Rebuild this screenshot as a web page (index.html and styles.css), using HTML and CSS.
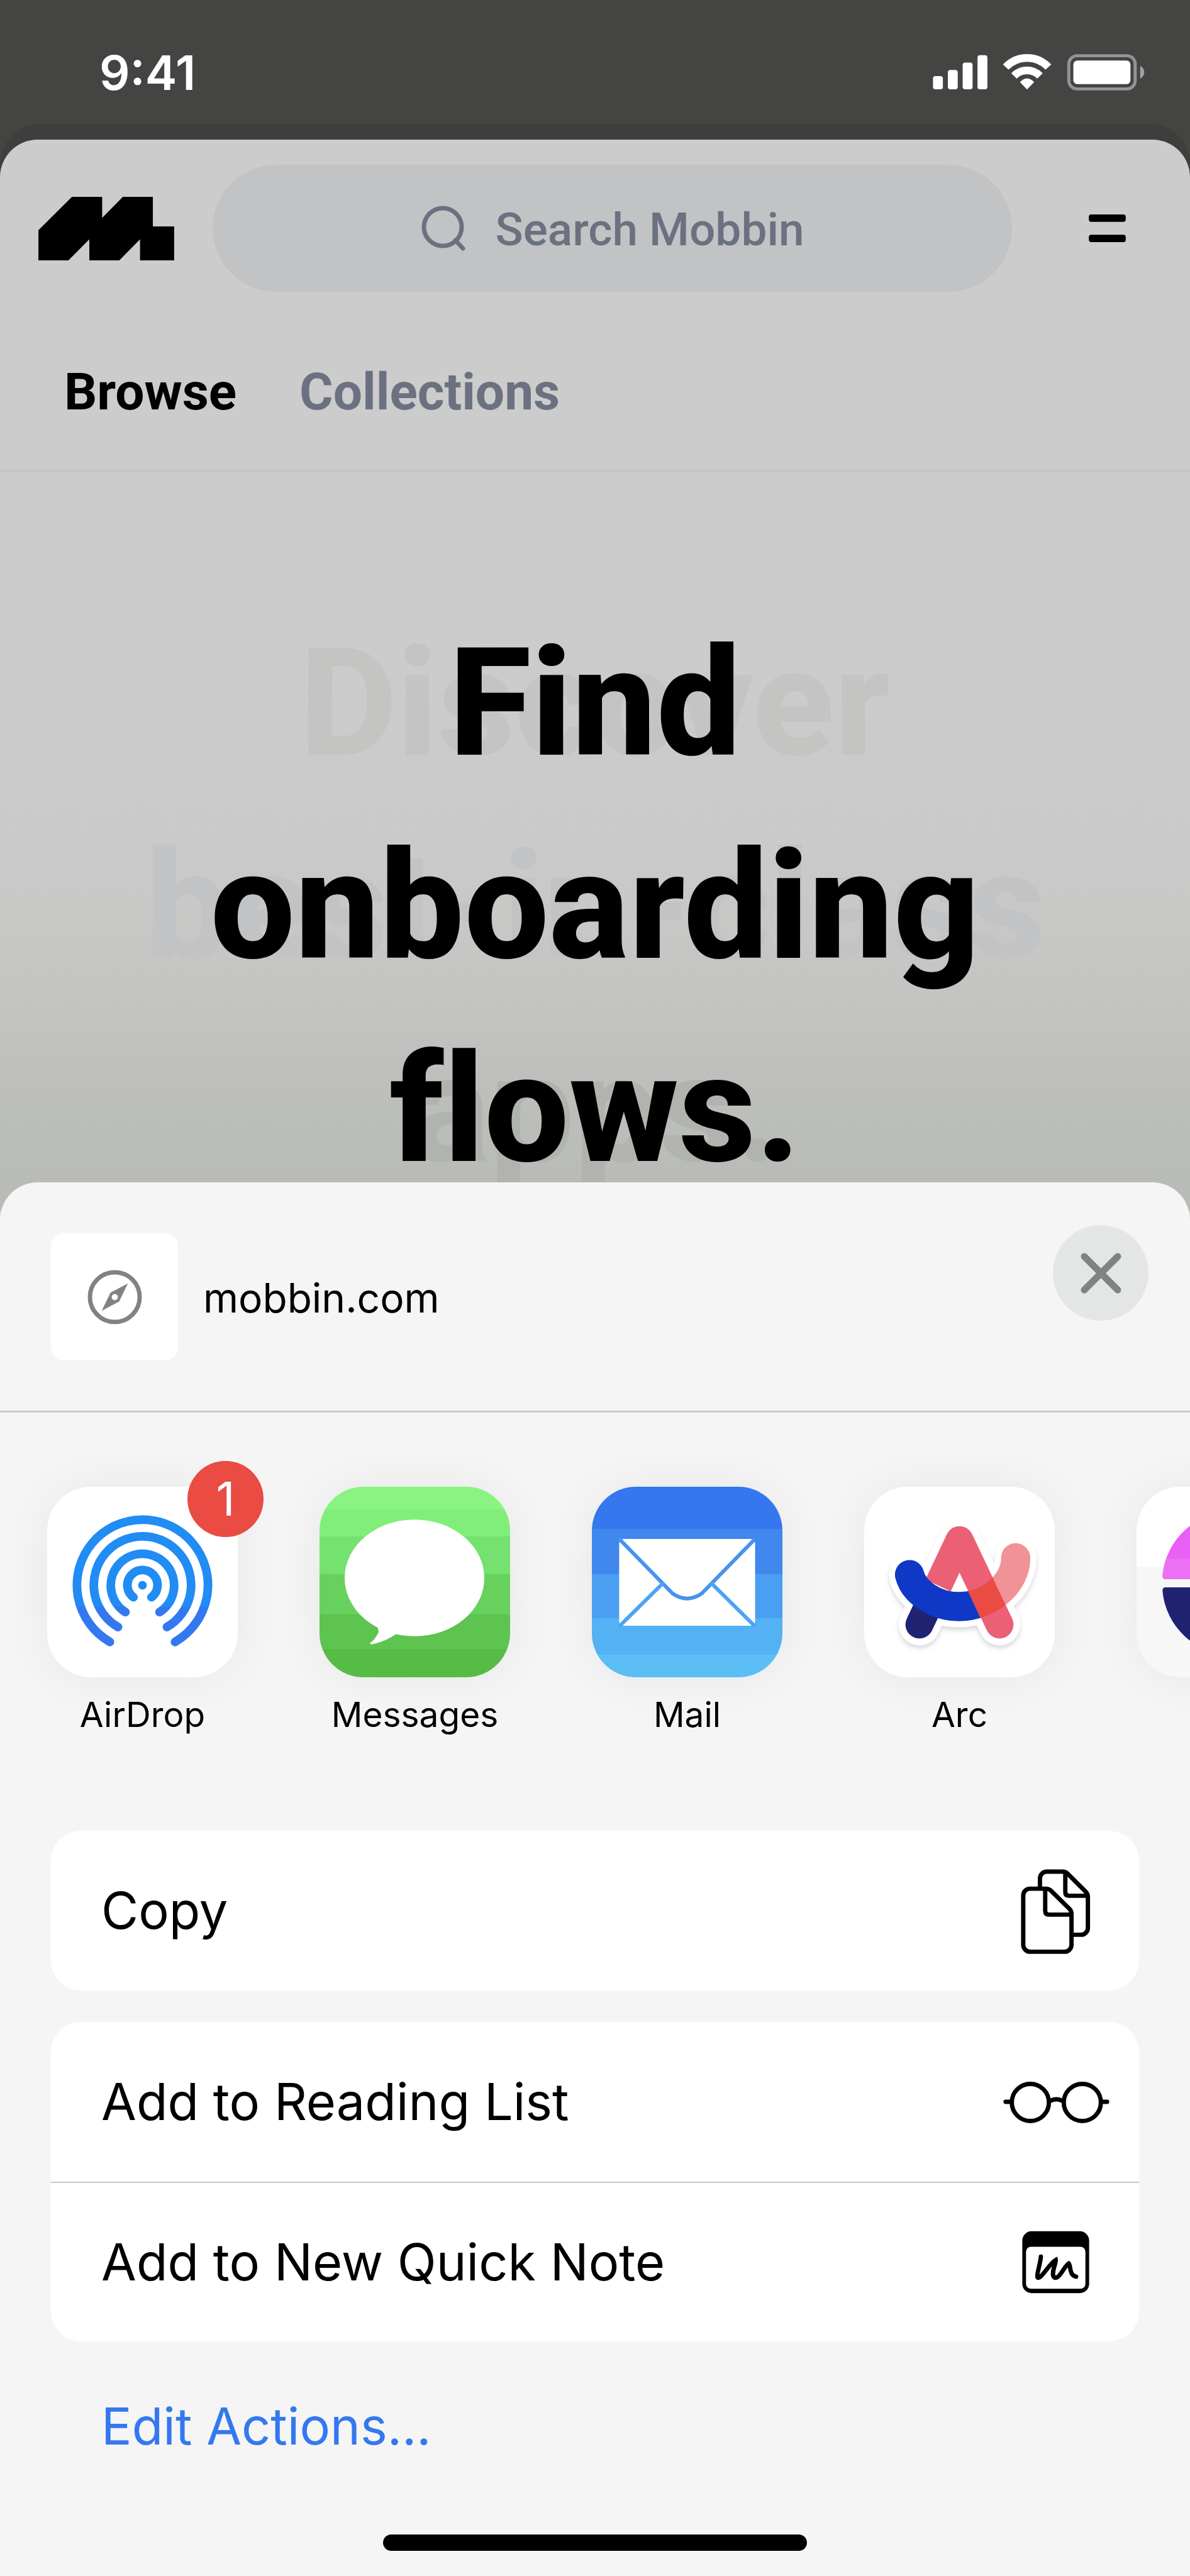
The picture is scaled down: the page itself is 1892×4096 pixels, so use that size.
FILE: index.html
```html
<!DOCTYPE html>
<html lang="en">
<head>
  <meta charset="UTF-8">
  <meta name="viewport" content="width=device-width, initial-scale=1">
  <title>Mobbin</title>
  <link rel="stylesheet" href="styles.css">
</head>
<body>
<div class="screen">

  <div class="statusbar">
    <span class="time">9:41</span>
    <svg class="status-icons" viewBox="135 85 1026 177" fill="#fff">
      <rect x="135" y="192" width="48" height="64" rx="12"/>
      <rect x="207" y="162" width="48" height="94" rx="12"/>
      <rect x="279" y="126" width="48" height="130" rx="12"/>
      <rect x="351" y="90" width="48" height="166" rx="12"/>
      <g fill="none" stroke="#fff" stroke-width="37">
        <path d="M488 148A143 143 0 0 1 695 148"/>
        <path d="M528 191A87 87 0 0 1 654 191"/>
      </g>
      <path d="M591 257L557 221Q591 186 626 221Z"/>
      <rect x="794" y="93" width="322" height="161" rx="40" fill="none" stroke="#949496" stroke-width="15"/>
      <rect x="816" y="116" width="277" height="115" rx="20"/>
      <path d="M1140 142Q1160 152 1160 173T1140 205Z" fill="#a0a0a2"/>
    </svg>
  </div>

  <div class="backcard">
    <main class="page">
      <header class="topbar">
        <a class="logo" href="#" aria-label="Mobbin">
          <svg viewBox="67 112 656 307"><path d="M67 273L229 112H375V214L475 112H620V255H723V419H558V317L458 419H313V317L212 419H67Z"/></svg>
        </a>
        <label class="search">
          <svg viewBox="0 0 70 72" fill="none" stroke="#6b7180" stroke-width="7" stroke-linecap="round">
            <circle cx="34" cy="34" r="30"/>
            <path d="M54 55L66 68"/>
          </svg>
          <input type="text" placeholder="Search Mobbin" aria-label="Search Mobbin">
        </label>
        <button class="menu" aria-label="Menu">
          <svg viewBox="0 0 60 46"><rect y="0" width="60" height="12" rx="4"/><rect y="33" width="60" height="12" rx="4"/></svg>
        </button>
      </header>
      <nav class="tabs">
        <a class="active" href="#">Browse</a>
        <a href="#">Collections</a>
      </nav>
      <section class="hero">
        <p class="headline ghost">
          <span class="g1">Discover</span>
          <span class="g2">best-in-class</span>
          <span class="g3">apps.</span>
        </p>
        <h1 class="headline">
          <span>Find</span>
          <span>onboarding</span>
          <span>flows.</span>
        </h1>
      </section>
    </main>
  </div>

  <section class="sheet">
    <div class="sheet-head">
      <div class="thumb">
        <svg viewBox="0 0 88 88" fill="none" stroke="#808284">
          <circle cx="44" cy="44" r="40" stroke-width="7"/>
          <path d="M65 22L51 51L23 66L37 37Z" fill="#808284" stroke="none"/>
          <circle cx="44" cy="44" r="5" fill="#fff" stroke="none"/>
        </svg>
      </div>
      <div class="site">mobbin.com</div>
      <button class="close" aria-label="Close">
        <svg viewBox="0 0 66 66" stroke="#808284" stroke-width="11" stroke-linecap="round"><path d="M6 6L60 60M60 6L6 60"/></svg>
      </button>
    </div>

    <div class="apps">
      <button class="app">
        <span class="app-icon">
          <svg viewBox="0 0 307 307">
            <defs>
              <linearGradient id="drop" gradientUnits="userSpaceOnUse" x1="0" y1="0" x2="0" y2="307">
                <stop offset="0.63" stop-color="#208cf4"/>
                <stop offset="0.63" stop-color="#3478f0"/>
              </linearGradient>
            </defs>
            <g fill="none" stroke="url(#drop)" stroke-width="14" stroke-linecap="round">
              <path d="M101 250A105.5 105.5 0 1 1 206 250"/>
              <path d="M114 226A78.4 78.4 0 1 1 193 226"/>
              <path d="M126 202A51 51 0 1 1 181 202"/>
              <path d="M139 178A24.3 24.3 0 1 1 168 178"/>
            </g>
            <circle cx="153.5" cy="158.7" r="7" fill="#208cf4"/>
          </svg>
          <span class="badge">1</span>
        </span>
        <span>AirDrop</span>
      </button>
      <button class="app">
        <span class="app-icon messages">
          <svg viewBox="0 0 307 307" fill="#fff">
            <ellipse cx="153" cy="147" rx="112.5" ry="94"/>
            <path d="M84 218Q101 229 92 240Q88 248 81 252Q82 255 88 253Q106 249 124 237Z"/>
          </svg>
        </span>
        <span>Messages</span>
      </button>
      <button class="app">
        <span class="app-icon mail">
          <svg viewBox="0 0 307 307">
            <rect x="44" y="84" width="219" height="140" rx="7" fill="#fff"/>
            <g fill="none" stroke-width="6">
              <path d="M44 84L130 172Q153 188 177 172L263 84" stroke="#4693f1"/>
              <path d="M115 155L44 225M192 155L263 225" stroke="#4da3f4"/>
            </g>
          </svg>
        </span>
        <span>Mail</span>
      </button>
      <button class="app">
        <span class="app-icon">
          <svg viewBox="0 0 307 307" fill="none" stroke-width="45" stroke-linecap="round">
            <defs>
              <path id="smile" d="M73 141.500C80 170 115 193 152 193C205 193 245 152 244 114.500"/>
              <clipPath id="left"><rect width="200" height="307"/></clipPath>
              <clipPath id="right"><rect x="200" width="107" height="307"/></clipPath>
              <clipPath id="leg"><path d="M129 86H178L242 222H192Z"/></clipPath>
            </defs>
            <g class="sticker" stroke="#fff" stroke-width="67" stroke-linejoin="round">
              <path d="M89 222L153.500 86L218 222"/>
              <use href="#smile"/>
            </g>
            <path d="M89 222L105 188" stroke="#1f2372"/>
            <path d="M119 159L153.500 86" stroke="#ec6075" stroke-linecap="butt"/>
            <use href="#smile" stroke="#1038c6" stroke-width="47" clip-path="url(#left)"/>
            <use href="#smile" stroke="#f09296" stroke-width="47" clip-path="url(#right)"/>
            <path d="M153.500 86L218 222" stroke="#ec6075"/>
            <use href="#smile" stroke="#ea4b42" stroke-width="47" clip-path="url(#leg)"/>
          </svg>
        </span>
        <span>Arc</span>
      </button>
      <button class="app" aria-label="More">
        <span class="app-icon next">
          <svg viewBox="0 0 307 307">
            <path d="M47 149Q41 149 42 142A112 112 0 0 1 265 142Q266 149 260 149Z" fill="#ea5ff5"/>
            <path d="M47 149Q41 149 42 142Q43 128 48 116H260V149Z" fill="#ec70f4"/>
            <path d="M47 162Q41 162 42 169A112 112 0 0 0 265 169Q266 162 260 162Z" fill="#1f2372"/>
          </svg>
        </span>
      </button>
    </div>

    <div class="actions">
      <button class="action">
        Copy
        <svg viewBox="0 0 184 152">
          <path d="M66.500 40V24a11 11 0 0 1 11-11H103q5 0 8 3L140.500 45.500q3.500 3.500 3.500 8V104a11 11 0 0 1-11 11H118M107.500 14V46q0 6 6 6H143"/>
          <path d="M50.500 40.500H76q5 0 8 3L114 73q3.500 3.500 3.500 8V131.500a11 11 0 0 1-11 11H50.500a11 11 0 0 1-11-11V51.500a11 11 0 0 1 11-11zM75 41V76.500q0 6 6 6H117"/>
        </svg>
      </button>
    </div>
    <div class="actions">
      <button class="action">
        Add to Reading List
        <svg viewBox="0 0 184 152">
          <circle cx="51" cy="77" r="30"/>
          <circle cx="135" cy="77" r="30"/>
          <path d="M84 74Q93 70 102 74M21 76H11M165 76H175"/>
        </svg>
      </button>
      <button class="action">
        Add to New Quick Note
        <svg viewBox="0 0 184 152">
          <path d="M53 26H131a15 15 0 0 1 15 15V111a15 15 0 0 1-15 15H53a15 15 0 0 1-15-15V41a15 15 0 0 1 15-15zM52 51a8 8 0 0 0-8 8V111a8 8 0 0 0 8 8H132a8 8 0 0 0 8-8V59a8 8 0 0 0-8-8z" fill="#000" fill-rule="evenodd" stroke="none"/>
          <path d="M68 67C67 80 60 98 63 101C68 104 82 78 92 72.500C93 78 83 95 90 101C98 104 106 82 113 78C117 82 113 97 125 99.500"/>
        </svg>
      </button>
    </div>
    <button class="edit">Edit Actions...</button>
    <div class="home-bar"></div>
  </section>

</div>
</body>
</html>
```
FILE: styles.css
```css
* {
  box-sizing: border-box;
}
body {
  margin: 0;
  font-family: Inter, "Noto Sans", sans-serif;
  color: #000;
}
button {
  border: none;
  background: none;
  padding: 0;
  font: inherit;
  color: inherit;
  cursor: pointer;
}
a {
  color: inherit;
  text-decoration: none;
}
svg {
  display: block;
}
.screen {
  position: relative;
  display: flex;
  flex-direction: column;
  min-height: 100vh;
  overflow: hidden;
  background: #444442;
}

/* status bar */
.statusbar {
  display: flex;
  justify-content: space-between;
  align-items: center;
  height: 197px;
  padding: 32px 72px 0 158px;
  color: #fff;
}
.time {
  font-size: 76px;
  font-weight: 600;
}
.status-icons {
  width: 337px;
  height: 58px;
}

/* page behind the sheet */
.backcard {
  flex: 1;
  display: flex;
  padding-top: 25px;
  border-radius: 64px 64px 0 0;
  background: #3e3e3c;
}
.page {
  flex: 1;
  border-radius: 60px 60px 0 0;
  background: #ccc;
  font-family: Roboto, "Noto Sans", sans-serif;
}
.topbar {
  display: flex;
  align-items: center;
  gap: 61px;
  padding: 40px 102px 0 61px;
}
.logo svg {
  width: 216px;
  height: 101px;
}
.search {
  flex: 1;
  display: flex;
  justify-content: center;
  align-items: center;
  gap: 48px;
  height: 202px;
  margin-right: 61px;
  border-radius: 101px;
  background: #c2c3c5;
}
.search svg {
  width: 70px;
  height: 72px;
}
.search input {
  width: 490px;
  padding: 4px 0 0;
  border: none;
  outline: none;
  background: none;
  font: 500 73px Roboto, "Noto Sans", sans-serif;
}
.search input::placeholder {
  color: #6b7180;
  opacity: 1;
}
.menu svg {
  width: 59px;
  height: 45px;
}
.tabs {
  display: flex;
  gap: 100px;
  padding: 115px 102px 80px;
  border-bottom: 4px solid #c2c4c3;
  font-size: 82px;
  font-weight: 700;
  line-height: 88px;
  color: #6b7180;
}
.tabs .active {
  color: #000;
}
.hero {
  display: grid;
  padding-top: 206px;
  background: linear-gradient(#ccc 200px, #cacaca 600px, #c6c6c4 770px, #c2c2c0 880px, #bcbeba 1010px, #b9bbb7 1130px);
}
.headline {
  grid-area: 1 / 1;
  margin: 0;
  text-align: center;
  font-size: 239px;
  font-weight: 800;
  line-height: 323px;
  font-variant-ligatures: none;
}
.headline span {
  display: block;
}
.ghost .g1 {
  color: #c4c4c2;
}
.ghost .g2 {
  color: #c2c3c5;
}
.ghost .g3 {
  color: #b1b3af;
}

/* share sheet */
.sheet {
  position: absolute;
  left: 0;
  right: 0;
  bottom: 0;
  padding-bottom: 40px;
  border-radius: 60px 60px 0 0;
  overflow: hidden;
  background: #f5f5f5;
}
.sheet-head {
  display: flex;
  align-items: center;
  gap: 40px;
  padding: 68px 66px 80px 81px;
  border-bottom: 3px solid #c9c9c9;
}
.thumb {
  display: flex;
  justify-content: center;
  align-items: center;
  width: 202px;
  height: 202px;
  margin-top: 13px;
  border-radius: 20px;
  background: #fff;
}
.thumb svg {
  width: 87px;
  height: 87px;
}
.site {
  flex: 1;
  padding-top: 16px;
  font-size: 64px;
}
.close {
  display: flex;
  justify-content: center;
  align-items: center;
  align-self: flex-start;
  width: 152px;
  height: 152px;
  border-radius: 50%;
  background: #e4e6e5;
}
.close svg {
  width: 65px;
  height: 65px;
}
.apps {
  display: flex;
  gap: 130px;
  padding: 118px 0 0 75px;
}
.app {
  display: flex;
  flex-direction: column;
  align-items: center;
  flex: none;
  gap: 24px;
  width: 303px;
  height: 547px;
  font-size: 55px;
  line-height: 70px;
}
.app-icon {
  position: relative;
  width: 303px;
  height: 303px;
  border-radius: 70px;
  background: #fff;
  box-shadow: 0 0 80px rgba(0, 10, 0, 0.06);
}
.app-icon.messages {
  background: linear-gradient(#8af482 12%, #81ee79 12% 26%, #75e16f 26% 46%, #68d15e 46% 67%, #5dc44f 67% 85%, #56bc46 85%);
}
.app-icon.mail {
  background: linear-gradient(#3477ee 22%, #4087ee 22% 46%, #4a9ff3 46% 69%, #54b2f4 69% 88%, #5bbff5 88%);
}
.app-icon.next {
  background: linear-gradient(#fff 42%, #f7f7f7 42%);
}
.sticker {
  filter: drop-shadow(0 5px 4px rgba(0, 0, 0, 0.14));
}
.badge {
  position: absolute;
  top: -41px;
  right: -41px;
  width: 121px;
  height: 121px;
  border-radius: 50%;
  background: #ea4b42;
  color: #fff;
  font-size: 74px;
  line-height: 121px;
}
.actions {
  margin: 0 81px 50px;
  border-radius: 48px;
  overflow: hidden;
  background: #fff;
}
.action {
  display: flex;
  justify-content: space-between;
  align-items: center;
  width: 100%;
  height: 254px;
  padding: 0 42px 0 80px;
  font-size: 81px;
}
.action + .action {
  border-top: 2px solid #c9c9c9;
}
.action svg {
  width: 181px;
  height: 150px;
  fill: none;
  stroke: #000;
  stroke-width: 7px;
  stroke-linecap: round;
}
.edit {
  display: block;
  height: 270px;
  margin-top: -50px;
  padding: 0 161px;
  font-size: 81px;
  color: #3478f0;
}
.home-bar {
  width: 674px;
  height: 26px;
  margin: 37px auto 0;
  border-radius: 13px;
  background: #000;
}
```
